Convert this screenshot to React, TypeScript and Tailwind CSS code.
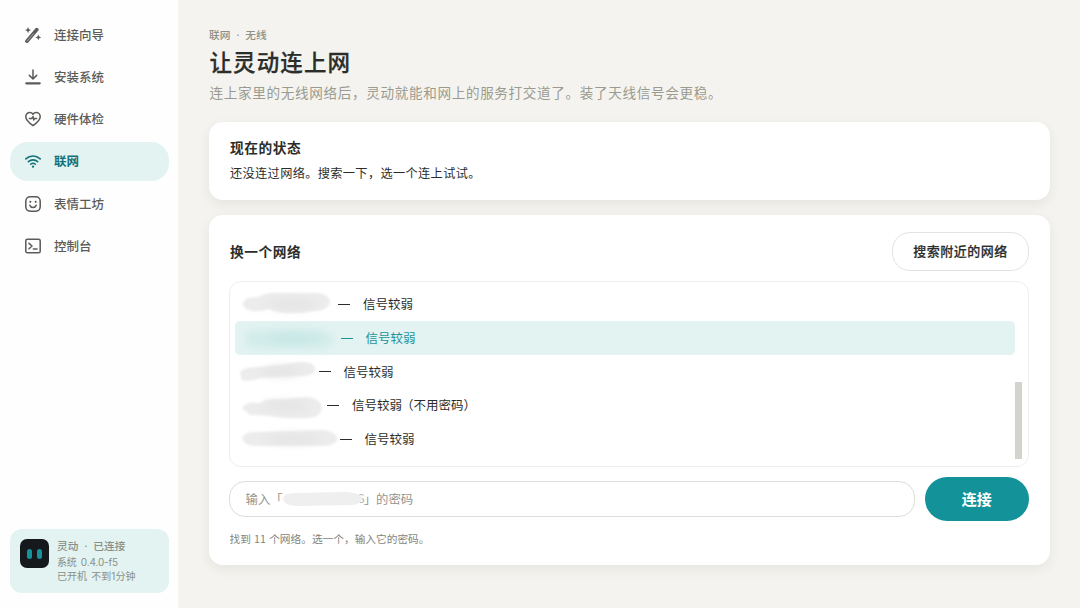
import type { ReactNode } from 'react';

const Icon = ({ children }: { children: ReactNode }) => (
  <svg
    viewBox="0 0 24 24"
    className="size-[16px] shrink-0"
    fill="none"
    stroke="currentColor"
    strokeWidth={2.3}
    strokeLinecap="round"
    strokeLinejoin="round"
  >
    {children}
  </svg>
);

const WandIcon = () => (
  <Icon>
    <path d="M3 21.2 17.6 4" strokeWidth={5.6} />
    <path d="M3.4 21 12.500 10.200" stroke="#c9c9c6" strokeWidth={1} />
    <g fill="currentColor" stroke="none">
      <path d="M4.600 0 6 3.200 9.200 4.600 6 6 4.600 9.200 3.200 6 0 4.600 3.200 3.200Z" />
      <path d="M20 11.200 21.300 14.300 24.400 15.600 21.300 16.900 20 20 18.700 16.900 15.600 15.600 18.700 14.300Z" />
    </g>
  </Icon>
);

const DownloadIcon = () => (
  <Icon>
    <path d="M12 1.500v13M6.500 9.500l5.500 5.500 5.500-5.500" />
    <path d="M2 21.500h20" strokeWidth={3.4} />
  </Icon>
);

const HealthIcon = () => (
  <Icon>
    <path d="M12 22C7 18.400 1.200 14.200 1.200 8.600c0-3.600 2.700-6.200 5.900-6.200 2 0 3.900 1 4.900 2.800 1-1.800 2.900-2.800 4.900-2.800 3.200 0 5.900 2.600 5.900 6.200C22.800 14.200 17 18.400 12 22Z" />
    <path d="M6.500 11.300h3.500l2.200-3 .8 5.200 1.500-2.200h3" strokeWidth={2.1} />
  </Icon>
);

const WifiIcon = () => (
  <Icon>
    <path d="M1.200 8.800a15.600 15.600 0 0 1 21.600 0" />
    <path d="M5 13a10.500 10.500 0 0 1 14 0" />
    <path d="M8.500 16.900a5.600 5.600 0 0 1 7 0" />
    <circle cx="12" cy="20.500" r="1.700" fill="currentColor" stroke="none" />
  </Icon>
);

const FaceIcon = () => (
  <Icon>
    <rect x="1.200" y="1.200" width="21.600" height="21.600" rx="6.500" />
    <path d="M7.200 13.800c.8 2.200 2.600 3.400 4.800 3.400s4-1.200 4.800-3.400" />
    <circle cx="8" cy="8.800" r="1.600" fill="currentColor" stroke="none" />
    <circle cx="16" cy="8.800" r="1.600" fill="currentColor" stroke="none" />
  </Icon>
);

const ConsoleIcon = () => (
  <Icon>
    <rect x="1.200" y="1.800" width="21.600" height="20.400" rx="2.500" />
    <path d="M6 8l4.500 4L6 16.200M12.500 16.500h5.500" />
  </Icon>
);

const navItems = [
  { label: '连接向导', icon: <WandIcon /> },
  { label: '安装系统', icon: <DownloadIcon /> },
  { label: '硬件体检', icon: <HealthIcon /> },
  { label: '联网', icon: <WifiIcon />, active: true },
  { label: '表情工坊', icon: <FaceIcon /> },
  { label: '控制台', icon: <ConsoleIcon /> },
];

type MaskProps = { d: string; width: number; color: string; soft?: boolean };

const Mask = ({ d, width, color, soft }: MaskProps) => (
  <svg
    style={{ width }}
    className={soft ? 'h-[33px] shrink-0 blur-[3px]' : 'h-[33px] shrink-0 blur-[1px]'}
    fill={color}
  >
    <path d={d} />
    <ellipse cx={width * 0.55} cy="17" rx={width * 0.24} ry="4" fill={soft ? '#c2e5e4' : '#e3e3e3'} className="blur-[4px]" />
  </svg>
);

const networks = [
  { width: 103, d: 'M8 17Q9 9 24 10Q31 5 48 6H83Q95 8 95 15Q93 24 79 24Q66 27 50 26Q39 25 35 22Q24 25 17 24Q8 22 8 17Z', note: '信号较弱' },
  { width: 105.5, d: 'M11 12Q11 9 20 9H80Q97 10 98 19Q97 26 86 27H20Q10 26 11 19Z', note: '信号较弱', selected: true },
  { width: 83.5, d: 'M5 18Q7 12 24 12L65 7Q81 7 80 15Q79 21 66 21L26 23Q14 27 7 25Z', note: '信号较弱' },
  { width: 92, d: 'M7 19Q12 12 25 14Q31 9 49 10L72 8Q85 9 87 18Q87 28 73 29Q51 30 34 27Q20 26 15 26Z', note: '信号较弱', extra: '（不用密码）' },
  { width: 104.5, d: 'M7 16Q11 9 19 10L88 8Q100 9 103 17Q100 24 87 24H22Q10 25 7 16Z', note: '信号较弱' },
];

export default function App() {
  return (
    <div className="flex h-[608px] w-[1080px] overflow-hidden bg-[#f4f3ef] font-['Noto_Sans_CJK_SC',sans-serif] text-[#2b2d2a]">
      <aside className="flex w-[179px] shrink-0 flex-col justify-between border-r border-[#f5f4f1] bg-[#fefefe] pt-[15px] pr-[9px] pb-[15px] pl-[10px]">
        <nav className="flex flex-col gap-[3.250px]">
          {navItems.map((item) => (
            <a
              key={item.label}
              className={
                item.active
                  ? 'flex h-[39px] items-center gap-[13px] rounded-[18px] bg-[#e2f3f1] pl-[15px] text-[12.500px] font-bold text-[#14717a]'
                  : 'flex h-[39px] items-center gap-[13px] rounded-[18px] pl-[15px] text-[12.500px] font-medium text-[#5b5c58]'
              }
            >
              {item.icon}
              <span className="pt-px">{item.label}</span>
            </a>
          ))}
        </nav>
        <div className="flex h-[64px] items-start gap-[8px] rounded-[12px] bg-[#e2f3f1] pt-[10px] pl-[10px] text-[#8b8f88]">
          <div className="flex size-[29px] shrink-0 items-center justify-center gap-[5px] rounded-[7px] bg-[#15191c]">
            <span className="h-[10px] w-[5px] rounded-full bg-[#16929a]" />
            <span className="h-[10px] w-[5px] rounded-full bg-[#16929a]" />
          </div>
          <div className="flex flex-col font-['Inter','Noto_Sans_CJK_SC',sans-serif] text-[10px] leading-[14.400px] whitespace-nowrap">
            <span className="text-[10.700px] leading-[16px] font-medium [word-spacing:3px]">灵动 · 已连接</span>
            <span className="tracking-[-0.150px] [word-spacing:1.500px]">系统 0.4.0-f5</span>
            <span className="[word-spacing:1.500px]">已开机 不到1分钟</span>
          </div>
        </div>
      </aside>

      <main className="flex min-w-0 flex-1 flex-col pt-[28px] pr-[30.500px] pl-[30px]">
        <header className="flex flex-col whitespace-nowrap">
          <span className="font-['Inter','Noto_Sans_CJK_SC',sans-serif] text-[10.700px] leading-[16px] font-medium text-[#8f9085] [word-spacing:3px]">
            联网 · 无线
          </span>
          <h1 className="pl-[0.500px] text-[22.500px] leading-[34px] font-medium tracking-[1.100px] [-webkit-text-stroke:0.250px]">让灵动连上网</h1>
          <p className="mt-[4px] pl-[0.500px] text-[13.600px] leading-[20px] tracking-[0.650px] text-[#9a9b90]">
            连上家里的无线网络后，灵动就能和网上的服务打交道了。装了天线信号会更稳。
          </p>
        </header>

        <section className="mt-[19.500px] flex h-[78.500px] shrink-0 flex-col rounded-[14px] bg-white px-[21px] pt-[15px] shadow-[0_4px_12px_rgba(40,40,30,0.07)]">
          <h2 className="text-[13.700px] leading-[21px] font-bold tracking-[0.550px]">现在的状态</h2>
          <p className="mt-[6px] text-[12.200px] leading-[19px] tracking-[0.350px]">还没连过网络。搜索一下，选一个连上试试。</p>
        </section>

        <section className="mt-[15px] flex h-[350px] shrink-0 flex-col rounded-[14px] bg-white px-[20.500px] pt-[17px] shadow-[0_4px_12px_rgba(40,40,30,0.07)]">
          <div className="flex items-center justify-between">
            <h2 className="pl-[0.500px] text-[13.700px] leading-[21px] font-bold tracking-[0.550px]">换一个网络</h2>
            <button className="h-[39px] w-[137px] rounded-[18px] border border-[#e4e3df] pb-px text-[13px] font-medium tracking-[0.500px] [-webkit-text-stroke:0.200px]">
              搜索附近的网络
            </button>
          </div>

          <div className="mt-[10px] -ml-[0.500px] flex h-[186px] rounded-[12px] border border-[#efeeeb] pt-[5px] pr-[6px] pl-[5px]">
            <ul className="flex flex-1 flex-col text-[12.500px]">
              {networks.map((network, index) => (
                <li
                  key={index}
                  className={
                    network.selected
                      ? 'flex h-[33.750px] items-center rounded-[5px] bg-[#e2f3f1] text-[#1c9299]'
                      : 'flex h-[33.750px] items-center'
                  }
                >
                  <Mask
                    d={network.d}
                    width={network.width}
                    color={network.selected ? '#d2ecea' : '#ececec'}
                    soft={network.selected}
                  />
                  <span className="mt-px h-px w-[12px] bg-current" />
                  <span className="mt-px ml-[13px]">{network.note}</span>
                  {network.extra && <span className="mt-px -ml-px">{network.extra}</span>}
                </li>
              ))}
            </ul>
            <div className="mt-[94.500px] h-[77px] w-[7px] bg-[#d2d3ca]" />
          </div>

          <div className="mt-[10px] -ml-[0.500px] flex items-center gap-[10px]">
            <div className="flex h-[36px] flex-1 items-center rounded-[16px] border border-[#deddd8] pl-[15.500px] text-[12.400px] text-[#94958f]">
              <span>输入「</span>
              <span className="-ml-[2px] flex w-[84px] items-center justify-end">
                <span className="text-[11.500px] text-[#b4b5b0]">S</span>
                <svg className="absolute mr-[2px] h-[18px] w-[80px] blur-[0.600px]" fill="#efefef">
                  <path d="M0 9Q0 3 12 3L62 2Q79 3 79 9Q78 15 67 15L14 16Q1 16 0 9Z" />
                </svg>
              </span>
              <span className="-ml-px">」的密码</span>
            </div>
            <button className="h-[44px] w-[104.500px] rounded-[22px] bg-[#14929a] text-[15px] font-bold text-white">
              连接
            </button>
          </div>
          <p className="mt-[10px] text-[10.700px] leading-[16px] text-[#83847c] [word-spacing:0.800px]">
            找到 11 个网络。选一个，输入它的密码。
          </p>
        </section>
      </main>
    </div>
  );
}
